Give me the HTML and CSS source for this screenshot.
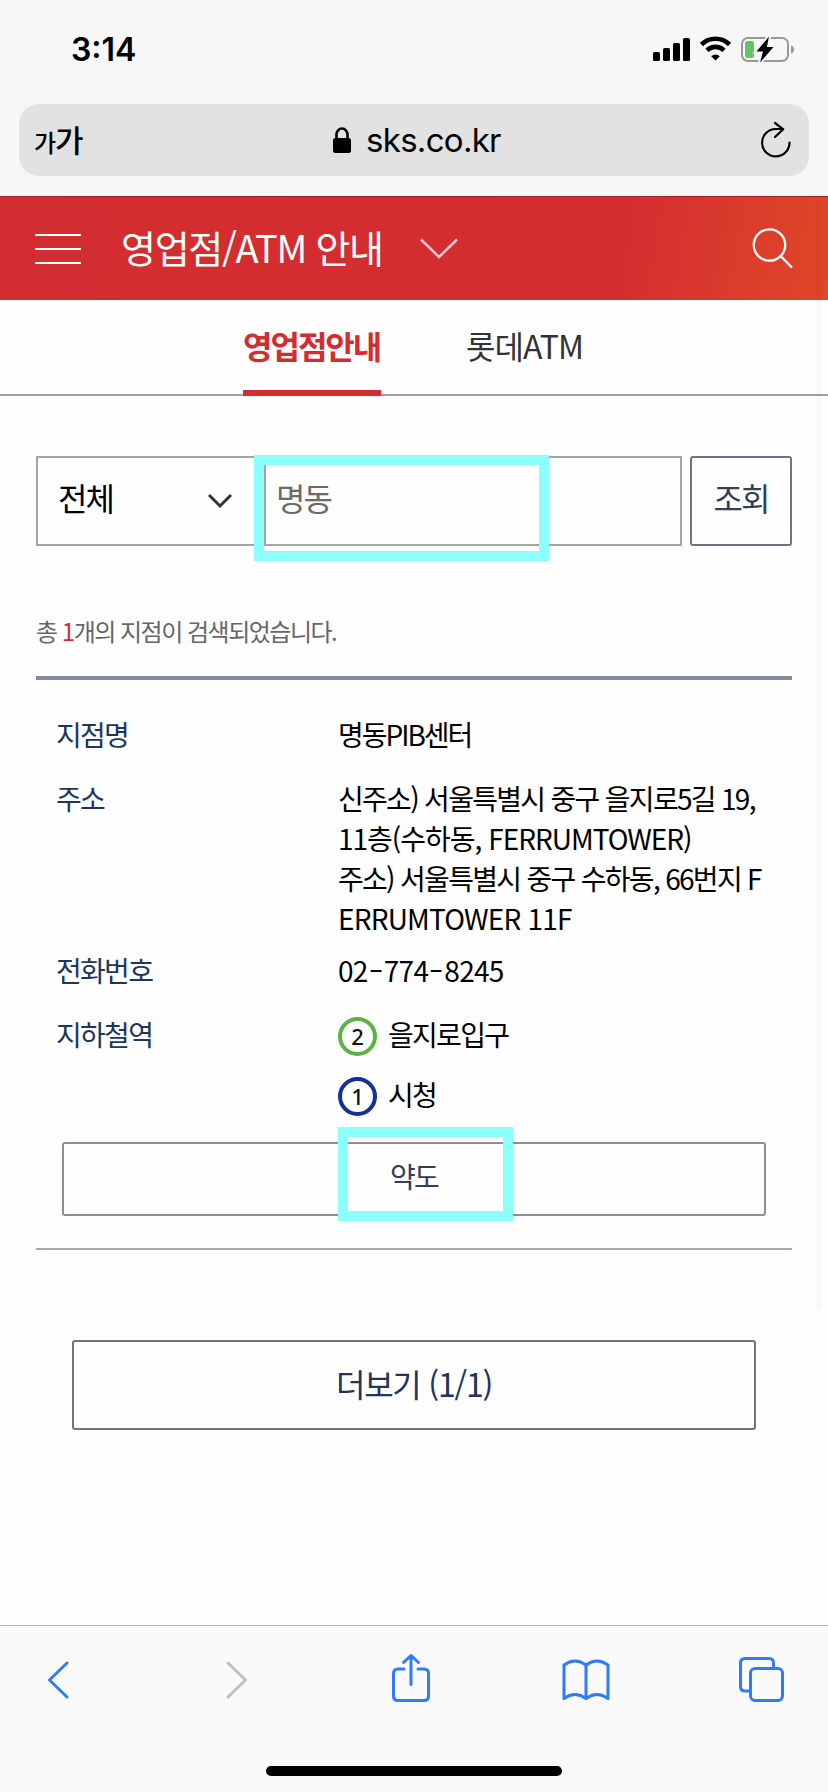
FILE: index.html
```html
<!DOCTYPE html>
<html lang="ko">
<head>
    <meta charset="UTF-8">
    <meta name="viewport" content="width=device-width, initial-scale=1.0">
    <title>영업점/ATM 안내</title>
    <link rel="stylesheet" href="styles.css">
</head>
<body>
    <div class="browser-top">
        <div class="status-bar">
            <span class="clock">3:14</span>
            <svg class="status-icons" width="142" height="28" viewBox="0 0 142 28">
                <rect x="0" y="15" width="7" height="9" rx="1.5"/>
                <rect x="10" y="11" width="7" height="13" rx="1.5"/>
                <rect x="20" y="6" width="7" height="18" rx="1.5"/>
                <rect x="30" y="1" width="7" height="23" rx="1.5"/>
                <g fill="none" stroke="#000" stroke-width="4.6">
                    <path d="M48.4 7.5a20 20 0 0 1 28.2 0"/>
                    <path d="M54 13.3a12.3 12.3 0 0 1 17 0"/>
                </g>
                <path d="M58.2 19.2a6.6 6.6 0 0 1 8.6 0l-4.3 4.4z"/>
                <rect x="89" y="1" width="46" height="23" rx="6" fill="none" stroke="#999" stroke-width="2"/>
                <path d="M138 8.5q3 .8 3 4t-3 4z" fill="#999"/>
                <rect x="92" y="4" width="9" height="17" rx="2.5" fill="#65c466"/>
                <path d="M116 -.5L103.500 14.500h6.500L107 25.500l13.500-15.500h-6.600z" stroke="#f7f7f7" stroke-width="4" paint-order="stroke"/>
            </svg>
        </div>
        <div class="address-bar">
            <span class="text-size"><small>가</small>가</span>
            <span class="site">
                <svg width="18" height="27" viewBox="0 0 18 27">
                    <rect x="0" y="11" width="18" height="15" rx="2.500"/>
                    <path d="M3.500 12V7.500a5.500 6 0 0 1 11 0V12" fill="none" stroke="#000" stroke-width="2.600"/>
                </svg>
                <span class="domain">sks.co.kr</span>
            </span>
            <svg class="reload" width="32" height="38" viewBox="0 0 32 38" fill="none" stroke="#000" stroke-width="2.200" stroke-linecap="round" stroke-linejoin="round">
                <path d="M29.500 21.500A13.700 13.700 0 1 1 15.800 8H23"/>
                <path d="M15 2l8.300 6.300L15 16"/>
            </svg>
        </div>
    </div>

    <header class="page-header">
        <div class="menu"><i></i><i></i><i></i></div>
        <h1>영업점/ATM 안내</h1>
        <svg class="title-arrow" width="38" height="22" viewBox="0 0 38 22" fill="none" stroke="#f9c9cf" stroke-width="2.500">
            <path d="M1 1.500L19 19 37 1.500"/>
        </svg>
        <svg class="search" width="42" height="42" viewBox="0 0 42 42" fill="none" stroke="#fff" stroke-width="2.300">
            <circle cx="17.500" cy="18" r="15.700"/>
            <path d="M28.500 29L40 40.500"/>
        </svg>
    </header>

    <nav class="tabs">
        <a class="tab active">영업점안내</a>
        <a class="tab">롯데ATM</a>
    </nav>

    <main>
        <form class="search-form">
            <div class="region">
                <span>전체</span>
                <svg width="26" height="16" viewBox="0 0 26 16" fill="none" stroke="#333" stroke-width="3">
                    <path d="M2 2l11 11L24 2"/>
                </svg>
            </div>
            <div class="keyword">
                <span>명동</span>
                <div class="highlight"></div>
            </div>
            <div class="submit">조회</div>
        </form>

        <p class="count">총 <em>1</em>개의 지점이 검색되었습니다.</p>

        <section class="branch">
            <dl>
                <dt>지점명</dt>
                <dd class="name">명동PIB센터</dd>
                <dt>주소</dt>
                <dd class="address">
                    <span class="line1">신주소) 서울특별시 중구 을지로5길 19,</span>
                    <span class="line2">11층(수하동, FERRUMTOWER)</span>
                    <span class="line3">주소) 서울특별시 중구 수하동, 66번지 F</span>
                    <span class="line4">ERRUMTOWER 11F</span>
                </dd>
                <dt>전화번호</dt>
                <dd class="phone">02<i>-</i>774<i>-</i>8245</dd>
                <dt>지하철역</dt>
                <dd class="stations">
                    <div class="station"><b class="line-no green">2</b>을지로입구</div>
                    <div class="station"><b class="line-no blue">1</b>시청</div>
                </dd>
            </dl>
            <div class="map-button">
                약도
                <div class="highlight"></div>
            </div>
        </section>

        <div class="more-button">더보기 (1/1)</div>
    </main>

    <div class="scrollbar"></div>

    <footer class="toolbar">
        <div class="tools">
            <svg class="back" width="22" height="38" viewBox="0 0 22 38"><path d="M20 2L2.500 19 20 36"/></svg>
            <svg class="forward" width="22" height="38" viewBox="0 0 22 38"><path d="M2 2l17.500 17L2 36"/></svg>
            <svg class="share" width="38" height="48" viewBox="0 0 38 48">
                <path d="M12 15H6q-4.500 0-4.500 4.500V42q0 4.500 4.500 4.500h26q4.500 0 4.500-4.500V19.500Q36.500 15 32 15h-6M19 30.500V2M11.500 8.500L19 1.500l7.500 7"/>
            </svg>
            <svg class="book" width="48" height="42" viewBox="0 0 48 42">
                <path d="M24 39.500Q13 31.500 2 39.500V6q11-8 22 0 11-8 22 0v33.500q-11-8-22 0zM24 6v33"/>
            </svg>
            <svg class="pages" width="46" height="46" viewBox="0 0 46 46">
                <path d="M11 34H6q-4.500 0-4.500-4.500V6q0-4.500 4.500-4.500h24q4.500 0 4.500 4.500v5"/>
                <rect x="11.500" y="11.500" width="32" height="32" rx="4.500"/>
            </svg>
        </div>
        <div class="home-bar"></div>
    </footer>
</body>
</html>
```
FILE: styles.css
```css
* {
    box-sizing: border-box;
}
body {
    display: flex;
    flex-direction: column;
    position: relative;
    width: 828px;
    height: 1792px;
    margin: 0;
    overflow: hidden;
    background-color: #fefefe;
    color: #000;
    font-family: "Noto Sans CJK KR", sans-serif;
    font-size: 28px;
    letter-spacing: -1.7px;
}
svg {
    display: block;
    flex: none;
    overflow: visible;
}

/* browser chrome */
.browser-top {
    height: 196px;
    background-color: #f7f7f7;
}
.status-bar {
    display: flex;
    justify-content: space-between;
    height: 104px;
    padding: 37px 33px 0 71px;
}
.clock {
    font: 600 32px/26px Inter, sans-serif;
    letter-spacing: 0;
}
.address-bar {
    display: flex;
    align-items: center;
    height: 72px;
    margin: 0 19px;
    padding: 0 17px 0 15px;
    border-radius: 20px;
    background-color: #e2e2e2;
}
.text-size {
    width: 299px;
    font-size: 31px;
    font-weight: 500;
    line-height: 40px;
    letter-spacing: -1px;
}
.text-size small {
    font-size: 24px;
}
.site {
    display: flex;
    align-items: center;
    gap: 15px;
}
.domain {
    font: 400 33px/40px Inter, sans-serif;
    letter-spacing: -0.7px;
}
.reload {
    margin-left: auto;
}

/* page header */
.page-header {
    display: flex;
    align-items: center;
    height: 104px;
    padding: 0 34px 0 35px;
    border-top: 1px solid #98222a;
    background: linear-gradient(100deg, #d22d30 0%, #d42e2f 75%, #df4429 97%, #e04628 100%);
    color: #fff;
}
.menu {
    display: grid;
    gap: 12px;
    width: 46px;
    margin-right: 40px;
}
.menu i {
    height: 2px;
    background-color: #fff;
}
h1 {
    width: 299px;
    margin: -4px 0 0;
    font-size: 38px;
    font-weight: 400;
    letter-spacing: -1.3px;
    white-space: nowrap;
}
.search {
    margin: -2px 0 0 auto;
}

.tabs {
    display: flex;
    gap: 85px;
    height: 96px;
    padding-left: 243px;
    border-bottom: 2px solid #9ba0ab;
}
.tab {
    height: 96px;
    color: #333;
    font-size: 32px;
    line-height: 91px;
    letter-spacing: -0.9px;
}
.tab.active {
    width: 138px;
    border-bottom: 6px solid #d42c30;
    color: #d42c30;
    font-weight: 700;
    letter-spacing: -2px;
}

main {
    padding: 60px 36px 0;
}
.search-form {
    display: flex;
    height: 90px;
    font-size: 32px;
    line-height: 78px;
    letter-spacing: -2px;
}
.region {
    display: flex;
    justify-content: space-between;
    width: 228px;
    padding: 0 31px 0 20px;
    border: 2px solid #a5a5a5;
    border-right: 0;
}
.region svg {
    margin-top: 35px;
}
.keyword {
    position: relative;
    width: 418px;
    margin-right: 8px;
    padding-left: 10px;
    border: 2px solid #a5a5a5;
    color: #6b6b6b;
}
.highlight {
    position: absolute;
    border: 10px solid #8bfffb;
}
.keyword .highlight {
    top: -3px;
    left: -12px;
    width: 295px;
    height: 106px;
}
.submit {
    width: 102px;
    border: 2px solid #6d7485;
    border-radius: 3px;
    color: #333e54;
    text-align: center;
}

.count {
    height: 40px;
    margin: 65px 0 25px;
    color: #666;
    font-size: 24px;
    line-height: 40px;
    letter-spacing: -1.5px;
}
.count em {
    color: #d42c30;
    font-style: normal;
}

/* branch result */
.branch {
    height: 574px;
    padding: 34px 26px 0;
    border-top: 4px solid #7f8ba1;
    border-bottom: 2px solid #a5a9b2;
}
dl {
    display: grid;
    grid-template-columns: 282px 1fr;
    grid-template-rows: 64px 172px 64px 124px;
    margin: 0 0 0 -6px;
    line-height: 40px;
}
dt {
    color: #20345c;
}
dd {
    margin: 0;
    white-space: nowrap;
}
.name {
    letter-spacing: -2px;
}
.address span {
    display: block;
}
.address .line2 {
    letter-spacing: -1px;
}
.address .line4 {
    letter-spacing: -0.8px;
}
.phone {
    letter-spacing: -0.7px;
}
.phone i {
    display: inline-block;
    margin: 0 4px 0 3px;
    font-style: normal;
    transform: scaleX(1.5);
}
.station {
    display: flex;
    gap: 11px;
    height: 60px;
}
.line-no {
    width: 39px;
    height: 39px;
    margin-top: 3px;
    border: 4px solid;
    border-radius: 50%;
    font: 500 22px/31px "Noto Sans", sans-serif;
    letter-spacing: 0;
    text-align: center;
}
.green {
    border-color: #5cb245;
}
.blue {
    border-color: #12319a;
}
.line-no {
    color: #111;
}
.map-button {
    position: relative;
    height: 74px;
    margin-top: 4px;
    border: 2px solid #8a8e9b;
    border-radius: 3px;
    color: #333e54;
    line-height: 64px;
    text-align: center;
}
.map-button .highlight {
    top: -17px;
    left: 274px;
    width: 175px;
    height: 94px;
}
.more-button {
    height: 90px;
    margin: 90px 36px 0;
    border: 2px solid #6f7480;
    border-radius: 3px;
    color: #20345c;
    font-size: 32px;
    line-height: 82px;
    letter-spacing: -1.2px;
    text-align: center;
}
.scrollbar {
    position: absolute;
    top: 202px;
    left: 816px;
    width: 6px;
    height: 1107px;
    border-radius: 3px;
    background-color: rgba(0, 0, 0, 0.02);
}

/* bottom toolbar */
.toolbar {
    height: 167px;
    margin-top: auto;
    border-top: 1px solid #b0b3b3;
    background-color: #fafafa;
}
.tools {
    display: flex;
    align-items: center;
    height: 108px;
    padding-left: 47px;
    fill: none;
    stroke: #307bf7;
    stroke-width: 3;
    stroke-linecap: round;
    stroke-linejoin: round;
}
.forward {
    margin-left: 157px;
    stroke: #bfbfbf;
}
.share {
    margin: -4px 0 0 144px;
}
.book {
    margin-left: 132px;
}
.pages {
    margin-left: 129px;
}
.home-bar {
    width: 296px;
    height: 10px;
    margin: 32px auto 0;
    border-radius: 5px;
    background-color: #000;
}
```
